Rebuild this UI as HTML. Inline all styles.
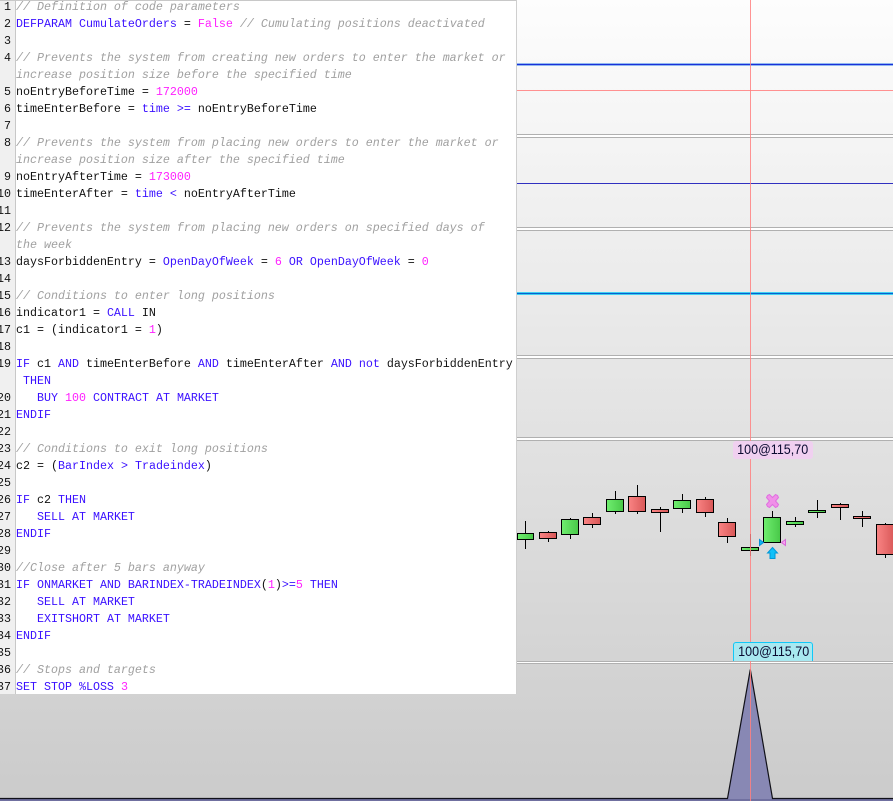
<!DOCTYPE html>
<html><head><meta charset="utf-8">
<style>
html,body{margin:0;padding:0}
body{width:893px;height:801px;position:relative;overflow:hidden;background:linear-gradient(#fdfdfd,#cbcbcb);font-family:"Liberation Sans",sans-serif}
.h{position:absolute;left:517px;right:0;height:1px}
.sep{background:#b0b0b0}
#code{position:absolute;left:0;top:0;width:516px;height:694px;background:#fff;overflow:hidden;border-right:1px solid #cfcfcf}
#gut{position:absolute;left:0;top:0;width:15px;height:694px;background:#f0f0f0;border-right:1px solid #c8c8c8}
#top{position:absolute;left:0;top:0;width:516px;height:1px;background:#c8c8c8}
#rows{position:absolute;left:0;top:1px;width:516px;height:693px}
.r{position:absolute;left:16px;height:17px;line-height:17px;font:11.67px/17px "Liberation Mono",monospace;color:#111;white-space:pre}
.n{position:absolute;left:-9px;width:20px;text-align:right;height:17px;font:11.67px/17px "Liberation Mono",monospace;color:#111}
i{color:#a0a0a0;font-style:italic}
b{font-weight:normal;color:#3a10ff}
u{text-decoration:none;color:#ff20ff}
.lb{position:absolute;left:733px;width:80px;text-align:center;font-size:14px;color:#0a0a30;box-sizing:border-box}
.lb span{display:inline-block;transform:scaleX(.895);white-space:nowrap}
</style></head><body>

<div class="h" style="top:63px;height:3px;background:#90b8f0"></div>
<div class="h" style="top:64px;background:#1a30d8"></div>
<div class="h" style="top:90px;background:#ff9090"></div>
<div class="h sep" style="top:134px"></div><div class="h" style="top:135px;height:2px;background:#fff"></div><div class="h sep" style="top:137px"></div>
<div class="h" style="top:183px;background:#3030c0"></div>
<div class="h sep" style="top:227px"></div><div class="h" style="top:228px;height:2px;background:#fff"></div><div class="h sep" style="top:230px"></div>
<div class="h" style="top:292px;height:3px;background:#40d0f0"></div>
<div class="h" style="top:293px;background:#0860d0"></div>
<div class="h sep" style="top:355px"></div><div class="h" style="top:356px;height:2px;background:#fff"></div><div class="h sep" style="top:358px"></div>
<div class="h sep" style="top:437px"></div><div class="h" style="top:438px;height:2px;background:#fff"></div><div class="h sep" style="top:440px"></div>
<div class="h sep" style="top:661px"></div><div class="h" style="top:662px;background:#fff"></div><div class="h sep" style="top:663px"></div>

<svg width="893" height="801" style="position:absolute;left:0;top:0">
<defs>
<linearGradient id="g"><stop offset="0" stop-color="#70ee70"/><stop offset="1" stop-color="#48c848"/></linearGradient>
<linearGradient id="p"><stop offset="0" stop-color="#fa8484"/><stop offset="1" stop-color="#d85858"/></linearGradient>
</defs>
<polygon points="727.5,798 750.3,669.5 772.5,798 772.5,801 727.5,801" fill="#8888b4"/>
<rect x="0" y="799" width="893" height="2" fill="#7070a0"/>
<polyline points="0,798.5 727.5,798.5 750.3,669.5 772.5,798.5 893,798.5" fill="none" stroke="#101018" stroke-width="1.2"/>
<g stroke="#000" stroke-width="1" shape-rendering="crispEdges">
<path d="M525.5 521V549M548.5 531V542M570.5 518V539M592.5 513V528M615.5 491V514M637.5 485V514M660.5 507V532M682.5 494V513M705.5 497V517M727.5 518V543M772.5 511V518M795.5 517V527M817.5 500V518M840.5 503V520M862.5 511V527M885.5 523V558" fill="none"/>
<rect x="517.5" y="533.5" width="16" height="6" fill="url(#g)"/>
<rect x="539.5" y="532.5" width="17" height="6" fill="url(#p)"/>
<rect x="561.5" y="519.5" width="17" height="15" fill="url(#g)"/>
<rect x="583.5" y="517.5" width="17" height="7" fill="url(#p)"/>
<rect x="606.5" y="499.5" width="17" height="12" fill="url(#g)"/>
<rect x="628.5" y="496.5" width="17" height="15" fill="url(#p)"/>
<rect x="651.5" y="509.5" width="17" height="3" fill="url(#p)"/>
<rect x="673.5" y="500.5" width="17" height="8" fill="url(#g)"/>
<rect x="696.5" y="499.5" width="17" height="13" fill="url(#p)"/>
<rect x="718.5" y="522.5" width="17" height="14" fill="url(#p)"/>
<path d="M750.5 534V556" fill="none"/>
<rect x="741.5" y="547.5" width="17" height="3" fill="url(#g)"/>
<rect x="763.5" y="517.5" width="17" height="25" fill="url(#g)"/>
<rect x="786.5" y="521.5" width="17" height="3" fill="url(#g)"/>
<rect x="808.5" y="510.5" width="17" height="2" fill="url(#g)"/>
<rect x="831.5" y="504.5" width="17" height="3" fill="url(#p)"/>
<rect x="853.5" y="516.5" width="17" height="2" fill="url(#p)"/>
<rect x="876.5" y="524.5" width="18" height="30" fill="url(#p)"/>
</g>
<rect x="750" y="0" width="1" height="801" fill="#ff8080" opacity=".85"/>
<path d="M767.5 495.5l2-1 3 3 3-3 2 1 1 2-3 3.500 3 3.500-1 2-2 1-3-3-3 3-2-1-1-2 3-3.500-3-3.500z" fill="#f090e8" stroke="#e070e0" stroke-width="1"/>
<polygon points="759.500,539.500 763.500,542.500 759.500,545.500" fill="#10b8f0" stroke="#0090d8"/>
<polygon points="785.500,539.500 781.500,542.500 785.500,545.500" fill="#f8a0f0" stroke="#d868d8"/>
<path d="M772.500 547.500L777.500 553H775V558.500H770V553H767.500z" fill="#10c0f8" stroke="#0098d8"/>
</svg>

<div class="lb" style="top:441px;height:18px;line-height:16px;background:#f0d0f0;border-radius:3px"><span>100@115,70</span></div>
<div class="lb" style="top:642px;height:19px;line-height:16px;background:#a8e8f0;border:1px solid #10c8f8;border-bottom:0;border-radius:3px 3px 0 0;padding-right:1px"><span>100@115,70</span></div>

<div id="code">
<div id="gut"></div><div id="top"></div>
<div id="rows">
<div class="n" style="top:-2px">1</div><div class="r" style="top:-2px"><i>// Definition of code parameters</i></div>
<div class="n" style="top:15px">2</div><div class="r" style="top:15px"><b>DEFPARAM CumulateOrders</b> = <u>False</u> <i>// Cumulating positions deactivated</i></div>
<div class="n" style="top:32px">3</div>
<div class="n" style="top:49px">4</div><div class="r" style="top:49px"><i>// Prevents the system from creating new orders to enter the market or</i></div>
<div class="r" style="top:66px"><i>increase position size before the specified time</i></div>
<div class="n" style="top:83px">5</div><div class="r" style="top:83px">noEntryBeforeTime = <u>172000</u></div>
<div class="n" style="top:100px">6</div><div class="r" style="top:100px">timeEnterBefore = <b>time</b> <b>&gt;=</b> noEntryBeforeTime</div>
<div class="n" style="top:117px">7</div>
<div class="n" style="top:134px">8</div><div class="r" style="top:134px"><i>// Prevents the system from placing new orders to enter the market or</i></div>
<div class="r" style="top:151px"><i>increase position size after the specified time</i></div>
<div class="n" style="top:168px">9</div><div class="r" style="top:168px">noEntryAfterTime = <u>173000</u></div>
<div class="n" style="top:185px">10</div><div class="r" style="top:185px">timeEnterAfter = <b>time</b> <b>&lt;</b> noEntryAfterTime</div>
<div class="n" style="top:202px">11</div>
<div class="n" style="top:219px">12</div><div class="r" style="top:219px"><i>// Prevents the system from placing new orders on specified days of</i></div>
<div class="r" style="top:236px"><i>the week</i></div>
<div class="n" style="top:253px">13</div><div class="r" style="top:253px">daysForbiddenEntry = <b>OpenDayOfWeek</b> = <u>6</u> <b>OR</b> <b>OpenDayOfWeek</b> = <u>0</u></div>
<div class="n" style="top:270px">14</div>
<div class="n" style="top:287px">15</div><div class="r" style="top:287px"><i>// Conditions to enter long positions</i></div>
<div class="n" style="top:304px">16</div><div class="r" style="top:304px">indicator1 = <b>CALL</b> IN</div>
<div class="n" style="top:321px">17</div><div class="r" style="top:321px">c1 = (indicator1 = <u>1</u>)</div>
<div class="n" style="top:338px">18</div>
<div class="n" style="top:355px">19</div><div class="r" style="top:355px"><b>IF</b> c1 <b>AND</b> timeEnterBefore <b>AND</b> timeEnterAfter <b>AND</b> <b>not</b> daysForbiddenEntry</div>
<div class="r" style="top:372px"> <b>THEN</b></div>
<div class="n" style="top:389px">20</div><div class="r" style="top:389px">   <b>BUY</b> <u>100</u> <b>CONTRACT AT MARKET</b></div>
<div class="n" style="top:406px">21</div><div class="r" style="top:406px"><b>ENDIF</b></div>
<div class="n" style="top:423px">22</div>
<div class="n" style="top:440px">23</div><div class="r" style="top:440px"><i>// Conditions to exit long positions</i></div>
<div class="n" style="top:457px">24</div><div class="r" style="top:457px">c2 = (<b>BarIndex</b> <b>&gt;</b> <b>Tradeindex</b>)</div>
<div class="n" style="top:474px">25</div>
<div class="n" style="top:491px">26</div><div class="r" style="top:491px"><b>IF</b> c2 <b>THEN</b></div>
<div class="n" style="top:508px">27</div><div class="r" style="top:508px">   <b>SELL AT MARKET</b></div>
<div class="n" style="top:525px">28</div><div class="r" style="top:525px"><b>ENDIF</b></div>
<div class="n" style="top:542px">29</div>
<div class="n" style="top:559px">30</div><div class="r" style="top:559px"><i>//Close after 5 bars anyway</i></div>
<div class="n" style="top:576px">31</div><div class="r" style="top:576px"><b>IF ONMARKET AND BARINDEX-TRADEINDEX</b>(<u>1</u>)<b>&gt;=</b><u>5</u> <b>THEN</b></div>
<div class="n" style="top:593px">32</div><div class="r" style="top:593px">   <b>SELL AT MARKET</b></div>
<div class="n" style="top:610px">33</div><div class="r" style="top:610px">   <b>EXITSHORT AT MARKET</b></div>
<div class="n" style="top:627px">34</div><div class="r" style="top:627px"><b>ENDIF</b></div>
<div class="n" style="top:644px">35</div>
<div class="n" style="top:661px">36</div><div class="r" style="top:661px"><i>// Stops and targets</i></div>
<div class="n" style="top:678px">37</div><div class="r" style="top:678px"><b>SET STOP %LOSS</b> <u>3</u></div>
</div>
</div>
</body></html>
